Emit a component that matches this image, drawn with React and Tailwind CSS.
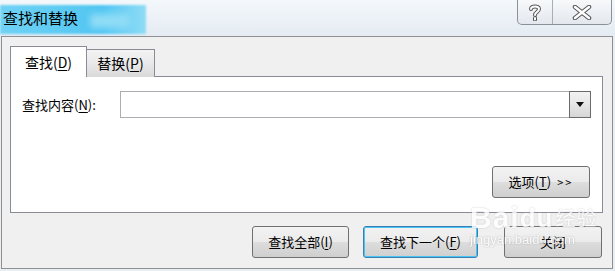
const font = "font-['Microsoft_YaHei','Noto_Sans_CJK_SC',sans-serif]";

function U({ children }) {
  return <span className="underline underline-offset-2">{children}</span>;
}

function WinButton({ children, className = "", focused = false }) {
  return (
    <div
      className={`flex items-center justify-center rounded-[3px] border bg-[linear-gradient(#f2f2f2_0%,#ebebeb_50%,#dddddd_51%,#cfcfcf_100%)] text-[13px] text-black ${
        focused ? "border-[#3c7fb1] shadow-[inset_0_0_0_1px_#48c4f4]" : "border-[#707070]"
      } ${className}`}
    >
      {children}
    </div>
  );
}

export default function App() {
  return (
    <div className={`relative h-[271px] w-[615px] overflow-hidden bg-[#e9eef3] ${font}`}>
      {/* title bar */}
      <div className="relative flex h-[36px] bg-[linear-gradient(180deg,#f4f8fb,#e4ebf2)]">
        <div className="absolute left-0 top-[5px] h-[29px] w-[146px] bg-[linear-gradient(90deg,#6fd2f5,#52c6f2_70%,#8fdcf7)] blur-[1px]" />
        <div className="absolute left-[90px] top-[14px] h-[14px] w-[40px] rounded bg-[#8fdcf6] blur-[3px]" />
        <div className="relative pl-[3px] pt-[8px] text-[15px] leading-[20px] text-black">查找和替换</div>
        <div className="ml-auto mr-[3px] flex h-[25px] rounded-b-[5px] border border-t-0 border-[#8b9196] bg-[linear-gradient(#f7f9fb,#e3e8ee)]">
          <div className="flex w-[35px] items-center justify-center border-r border-[#a9aeb3]">
            <svg width="12" height="17" viewBox="0 0 12 17">
              <path d="M2 5 C2 1.5 10 1.5 10 5 C10 8 6 8 6 11 M6 14 L6 15.5" fill="none" stroke="#555" strokeWidth="4" strokeLinecap="round" />
              <path d="M2 5 C2 1.5 10 1.5 10 5 C10 8 6 8 6 11 M6 14 L6 15.5" fill="none" stroke="#fff" strokeWidth="2" strokeLinecap="round" />
            </svg>
          </div>
          <div className="flex w-[58px] items-center justify-center">
            <svg width="20" height="15" viewBox="0 0 20 15">
              <path d="M3 2 L17 13 M17 2 L3 13" fill="none" stroke="#555" strokeWidth="4.5" strokeLinecap="round" />
              <path d="M3 2 L17 13 M17 2 L3 13" fill="none" stroke="#fff" strokeWidth="2.5" strokeLinecap="round" />
            </svg>
          </div>
        </div>
      </div>

      {/* dialog body */}
      <div className="ml-[1px] h-[233px] w-[612px] border border-[#8e9093] bg-[#f0f0f0] pl-[8px] pt-[9px]">
        {/* tabs */}
        <div className="flex h-[31px] items-end">
          <div className="relative z-10 flex h-[31px] w-[77px] items-center justify-center border border-b-0 border-[#898c95] bg-white pt-[1px] text-[14px]">
            查找(<U>D</U>)
          </div>
          <div className="flex h-[28px] w-[68px] items-center justify-center border border-l-0 border-b-0 border-[#898c95] bg-[linear-gradient(#f3f3f3,#e9e9e9_50%,#d9d9d9)] text-[14px]">
            替换(<U>P</U>)
          </div>
        </div>

        {/* panel */}
        <div className="-mt-px flex h-[137px] w-[593px] flex-col border border-[#898c95] bg-white px-[11px] pt-[14px]">
          <div className="flex items-center">
            <div className="w-[98px] text-[13px]">
              查找内容(<U>N</U>):
            </div>
            <div className="flex h-[27px] w-[471px] border border-[#abadb3] bg-white">
              <div className="flex-1" />
              <div className="-my-px -mr-px flex w-[22px] items-center justify-center border border-[#6b6b6b] bg-[linear-gradient(#f2f2f2,#e6e6e6_50%,#d6d6d6)]">
                <svg width="8" height="5" viewBox="0 0 8 5">
                  <path d="M0 0 H8 L4 5 Z" fill="#111" />
                </svg>
              </div>
            </div>
          </div>
          <div className="mt-[48px] flex justify-end pr-[1px]">
            <WinButton className="h-[32px] w-[98px] gap-[6px]">
              <span>
                选项(<U>T</U>)
              </span>
              <span className="text-[11px] tracking-[2px]">&gt;&gt;</span>
            </WinButton>
          </div>
        </div>

        {/* bottom buttons */}
        <div className="mt-[13px] flex pl-[242px]">
          <WinButton className="h-[32px] w-[97px]">
            查找全部(<U>I</U>)
          </WinButton>
          <WinButton focused className="ml-[14px] h-[32px] w-[115px]">
            查找下一个(<U>F</U>)
          </WinButton>
          <WinButton className="ml-[26px] h-[32px] w-[98px]">关闭</WinButton>
        </div>
      </div>

      {/* watermark */}
      <div className="pointer-events-none absolute left-[470px] top-[203px] flex flex-col items-start font-['Liberation_Sans',sans-serif] text-white opacity-80">
        <div className="flex items-end text-[30px] font-bold leading-[30px] tracking-[1px] [text-shadow:0_0_2px_#bbb]">
          Bai<span className="text-[26px]">du</span>
          <span className={`ml-[2px] text-[20px] font-normal ${font}`}>经验</span>
        </div>
        <div className="text-[13px] leading-[14px] [text-shadow:0_0_2px_#999]">jingyan.baidu.com</div>
      </div>
    </div>
  );
}
